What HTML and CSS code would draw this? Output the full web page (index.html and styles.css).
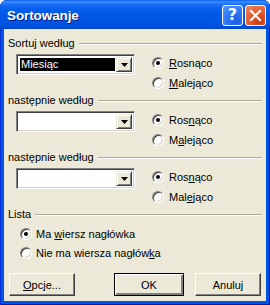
FILE: index.html
```html
<!DOCTYPE html>
<html lang="pl">
<head>
<meta charset="utf-8">
<title>Sortowanje</title>
<link rel="stylesheet" href="styles.css">
</head>
<body>
<div class="window">
  <div class="titlebar">
    <span class="title">Sortowanje</span>
    <div class="tbtns">
      <span class="tb help">?</span>
      <span class="tb close"><svg width="13" height="13" viewBox="0 0 13 13"><path d="M2 2 L11 11 M11 2 L2 11" stroke="#fff" stroke-width="2.2" stroke-linecap="square"/></svg></span>
    </div>
  </div>
  <div class="client">
    <section class="group">
      <div class="head"><span>Sortuj według</span></div>
      <div class="row">
        <div class="combo"><span class="val"><span class="sel">Miesiąc</span></span><span class="drop"><svg width="7" height="4" viewBox="0 0 7 4"><path d="M0 0H7L3.5 4Z" fill="#000"/></svg></span></div>
        <div class="radios">
          <div class="opt"><span class="radio on"></span><span><u>R</u>osnąco</span></div>
          <div class="opt"><span class="radio"></span><span><u>M</u>alejąco</span></div>
        </div>
      </div>
    </section>
    <section class="group">
      <div class="head"><span>następnie według</span></div>
      <div class="row">
        <div class="combo"><span class="val"></span><span class="drop"><svg width="7" height="4" viewBox="0 0 7 4"><path d="M0 0H7L3.5 4Z" fill="#000"/></svg></span></div>
        <div class="radios">
          <div class="opt"><span class="radio on"></span><span>Ros<u>n</u>ąco</span></div>
          <div class="opt"><span class="radio"></span><span>M<u>a</u>lejąco</span></div>
        </div>
      </div>
    </section>
    <section class="group">
      <div class="head"><span>następnie według</span></div>
      <div class="row">
        <div class="combo"><span class="val"></span><span class="drop"><svg width="7" height="4" viewBox="0 0 7 4"><path d="M0 0H7L3.5 4Z" fill="#000"/></svg></span></div>
        <div class="radios">
          <div class="opt"><span class="radio on"></span><span>Ros<u>n</u>ąco</span></div>
          <div class="opt"><span class="radio"></span><span>Mal<u>e</u>jąco</span></div>
        </div>
      </div>
    </section>
    <section class="group list">
      <div class="head"><span>Lista</span></div>
      <div class="list-opts">
        <div class="opt"><span class="radio on"></span><span>Ma <u>w</u>iersz nagłówka</span></div>
        <div class="opt"><span class="radio"></span><span>Nie ma wiersza nagłów<u>k</u>a</span></div>
      </div>
    </section>
    <div class="buttons">
      <span class="btn"><span><u>O</u>pcje...</span></span>
      <span class="btn default"><span>OK</span></span>
      <span class="btn"><span>Anuluj</span></span>
    </div>
  </div>
</div>
</body>
</html>
```
FILE: styles.css
```css
html, body {
  margin: 0;
  padding: 0;
  width: 270px;
  height: 305px;
  overflow: hidden;
  background: #ffffff;
}

.window {
  width: 270px;
  height: 305px;
  box-sizing: border-box;
  display: flex;
  flex-direction: column;
  background: #0054E3;
  border-radius: 7px 7px 0 0;
  box-shadow: inset 1px 0 0 #0831D9, inset -1px 0 0 #001EA0, inset 0 -1px 0 #001EA0;
  font-family: "Liberation Sans", Arial, sans-serif;
  font-size: 11px;
  color: #000;
  overflow: hidden;
}

.titlebar {
  height: 29px;
  flex: none;
  display: flex;
  align-items: center;
  justify-content: space-between;
  padding: 0 4px 0 7px;
  border-radius: 7px 7px 0 0;
  background: linear-gradient(to bottom, #0A5FEA 0px, #3D8FFD 2px, #1C70F6 4px, #0762ED 8px, #0058E7 14px, #0055E3 22px, #0050DC 26px, #0046D0 29px);
}

.title {
  color: #fff;
  font-family: "Liberation Sans", Arial, sans-serif;
  font-weight: bold;
  font-size: 13.5px;
  letter-spacing: -0.1px;
  text-shadow: 1px 1px 0 #0A1883;
  padding-top: 1px;
}

.tbtns {
  display: flex;
  gap: 2px;
  padding-top: 1px;
}

.tb {
  width: 21px;
  height: 21px;
  box-sizing: border-box;
  border: 1px solid #fff;
  border-radius: 3px;
  display: flex;
  align-items: center;
  justify-content: center;
  color: #fff;
}

.help {
  background: radial-gradient(circle at 70% 80%, #1F5FE0 0%, #2E78F5 50%, #5A9BFF 100%);
  font-family: "DejaVu Sans", sans-serif;
  font-weight: bold;
  font-size: 16px;
  line-height: 1;
}

.close {
  background: radial-gradient(circle at 70% 80%, #C53B13 0%, #E2572C 45%, #F08A64 100%);
}

.client {
  flex: 1;
  margin: 0 4px 4px 4px;
  background: #ECE9D8;
  padding-top: 8px;
  display: flex;
  flex-direction: column;
}

.group {
  height: 57px;
}

.head {
  display: flex;
  align-items: center;
  gap: 4px;
  height: 13px;
  padding: 0 4px;
  line-height: 13px;
}

.head::after {
  content: "";
  flex: 1;
  height: 0;
  border-top: 1px solid #ACA899;
  border-bottom: 1px solid #FFFFFF;
  margin-top: 1px;
}

.row {
  display: flex;
  margin-top: 4px;
  padding-left: 12px;
}

.combo {
  width: 119px;
  height: 21px;
  box-sizing: border-box;
  background: #fff;
  border: 1px solid;
  border-color: #808080 #FFFFFF #FFFFFF #808080;
  box-shadow: inset 1px 1px 0 #404040, inset -1px -1px 0 #D4D0C8;
  display: flex;
  padding: 2px;
}

.val {
  flex: 1;
  display: flex;
  padding: 1px;
}

.sel {
  flex: 1;
  background: #000;
  color: #fff;
  line-height: 13px;
  padding-left: 1px;
}

.drop {
  width: 16px;
  flex: none;
  box-sizing: border-box;
  background: #ECE9D8;
  border: 1px solid;
  border-color: #ECE9D8 #404040 #404040 #ECE9D8;
  box-shadow: inset 1px 1px 0 #FFFFFF, inset -1px -1px 0 #808080;
  display: flex;
  align-items: center;
  justify-content: center;
}

.radios {
  margin-left: 17px;
  display: flex;
  flex-direction: column;
  gap: 3px;
}

.opt {
  display: flex;
  align-items: center;
  gap: 5px;
  height: 17px;
}

.radio {
  width: 12px;
  height: 12px;
  box-sizing: border-box;
  border-radius: 50%;
  border: 1px solid;
  border-color: #808080 #FFFFFF #FFFFFF #808080;
  background: #fff;
  box-shadow: inset 1px 1px 0 #404040, inset -1px -1px 0 #D4D0C8;
  display: flex;
  align-items: center;
  justify-content: center;
  flex: none;
}

.radio.on::after {
  content: "";
  width: 4px;
  height: 4px;
  border-radius: 50%;
  background: #000;
}

u {
  text-decoration: underline;
  text-underline-offset: 1px;
}

.list {
  height: auto;
}

.list-opts {
  margin-top: 4px;
  padding-left: 16px;
  display: flex;
  flex-direction: column;
  gap: 2px;
}

.list-opts .opt {
  gap: 4px;
}

.buttons {
  display: flex;
  margin-top: 12px;
  padding-left: 5px;
}

.btn {
  width: 66px;
  height: 23px;
  box-sizing: border-box;
  background: #ECE9D8;
  border: 1px solid;
  border-color: #FFFFFF #404040 #404040 #FFFFFF;
  box-shadow: inset -1px -1px 0 #808080;
  display: flex;
  align-items: center;
  justify-content: center;
}

.btn.default {
  width: 70px;
  margin-left: 39px;
  margin-right: 11px;
  border: 1px solid #000;
  box-shadow: inset 1px 1px 0 #FFFFFF, inset -2px -2px 0 #808080;
}
```
